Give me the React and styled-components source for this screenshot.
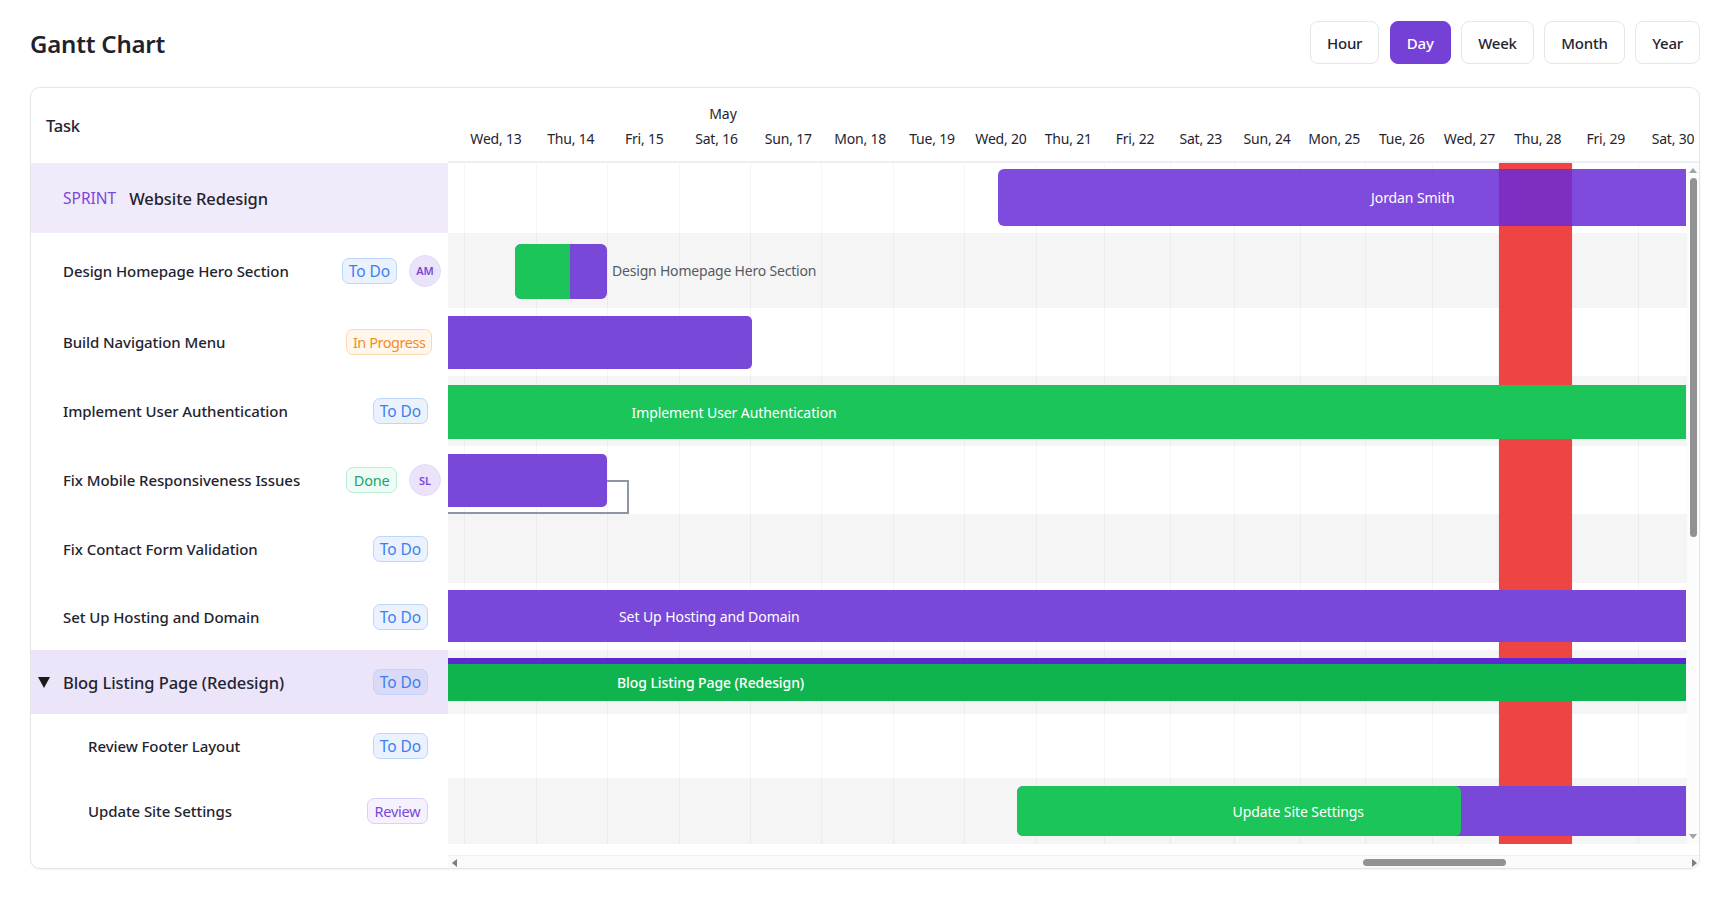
import React from 'react';
import styled, { createGlobalStyle } from 'styled-components';

const PURPLE = '#7a48d8';
const GREEN = '#1cc55a';

const ranges = ['Hour', 'Day', 'Week', 'Month', 'Year'];

const days = [
  ['Wed, 13', 75], ['Thu, 14', 74.5], ['Fri, 15', 72.5], ['Sat, 16', 72],
  ['Sun, 17', 71.5], ['Mon, 18', 72.5], ['Tue, 19', 71], ['Wed, 20', 67],
  ['Thu, 21', 67.5], ['Fri, 22', 66], ['Sat, 23', 65.5], ['Sun, 24', 67],
  ['Mon, 25', 67.5], ['Tue, 26', 67.5], ['Wed, 27', 68], ['Thu, 28', 68.5],
  ['Fri, 29', 67.5], ['Sat, 30', 67],
];

const gridColumns = [
  17, 71.5, 71, 72, 71, 71, 72, 71, 72, 68, 66.5, 64, 65.5, 65, 67, 66.5, 73.5, 66.5,
];

const rows = [
  {
    id: 'sprint', kind: 'sprint', height: 70, name: 'Website Redesign',
    bars: [{ left: 550, width: 688, top: 6, height: 57, radius: '6px 0 0 6px', color: '#692cd6', fade: true, label: 'Jordan Smith', labelAt: 373 }],
  },
  {
    id: 'hero', height: 75, shade: true, name: 'Design Homepage Hero Section', status: 'todo', avatar: 'AM',
    bars: [{ left: 67, width: 92, top: 11, height: 55, radius: '6px', progress: 55, progressRadius: '6px 0 0 6px' }],
    outside: { text: 'Design Homepage Hero Section', left: 164 },
  },
  {
    id: 'nav', height: 68, name: 'Build Navigation Menu', status: 'progress',
    bars: [{ left: 0, width: 303.5, top: 8, height: 53, radius: '0 5px 5px 0' }],
  },
  {
    id: 'auth', height: 70, shade: true, name: 'Implement User Authentication', status: 'todo',
    bars: [{ left: 0, width: 1238, top: 9, height: 54, color: GREEN, label: 'Implement User Authentication', labelAt: 183.5 }],
  },
  {
    id: 'mobile', height: 68, name: 'Fix Mobile Responsiveness Issues', status: 'done', avatar: 'SL',
    bars: [{ left: 0, width: 159, top: 8, height: 53, radius: '0 5px 5px 0' }],
  },
  { id: 'form', height: 69, shade: true, name: 'Fix Contact Form Validation', status: 'todo', bars: [] },
  {
    id: 'hosting', height: 67, name: 'Set Up Hosting and Domain', status: 'todo',
    bars: [{ left: 0, width: 1238, top: 7, height: 52, label: 'Set Up Hosting and Domain', labelAt: 171 }],
  },
  {
    id: 'blog', kind: 'group', height: 64, shade: true, name: 'Blog Listing Page (Redesign)', status: 'todo',
    bars: [{ left: 0, width: 1238, top: 8, height: 43, color: '#5f28d2', strip: true, label: 'Blog Listing Page (Redesign)', labelAt: 169 }],
  },
  { id: 'footer', kind: 'child', height: 64, name: 'Review Footer Layout', status: 'todo', bars: [] },
  {
    id: 'settings', kind: 'child', height: 66, shade: true, name: 'Update Site Settings', status: 'review',
    bars: [{ left: 568.5, width: 669.5, top: 8, height: 50, radius: '6px 0 0 6px', progress: 444.5, progressRadius: '6px', label: 'Update Site Settings', labelAt: 216 }],
  },
];

const statusLabels = { todo: 'To Do', progress: 'In Progress', done: 'Done', review: 'Review' };

const statusStyles = {
  todo: { bg: 'rgba(59, 130, 246, 0.1)', border: '#bcd6fd', text: '#3b7ff0', size: 15.5, spacing: -0.1, pad: 6 },
  progress: { bg: '#fff7ed', border: '#fdd9ae', text: '#f58c1d', size: 14.5, spacing: -0.45, pad: 5.5 },
  done: { bg: '#eefcf5', border: '#b5eed2', text: '#17a56c', size: 14.5, spacing: -0.2, pad: 6.5 },
  review: { bg: '#f5f1fe', border: '#dccffa', text: '#7a48d8', size: 14.5, spacing: -0.2, pad: 6.5 },
};

const GlobalStyle = createGlobalStyle`
  html, body {
    margin: 0;
    background: #fff;
  }
  body {
    font-family: 'Noto Sans', 'Open Sans', sans-serif;
    color: #1f2430;
  }
  * {
    box-sizing: border-box;
  }
`;

const Page = styled.div`
  width: 1725px;
  height: 912px;
  padding-left: 30px;
  overflow: hidden;
`;

const TopBar = styled.header`
  width: 1670px;
  height: 87px;
  padding-top: 21px;
  display: flex;
  justify-content: space-between;
  align-items: flex-start;
`;

const Title = styled.h1`
  margin: 0;
  height: 45px;
  line-height: 45px;
  font-size: 24px;
  font-weight: 600;
  letter-spacing: -0.2px;
  color: #1d222c;
`;

const RangeGroup = styled.div`
  display: flex;
  gap: 10.5px;
`;

const RangeButton = styled.button`
  height: 43px;
  padding: 0 16px;
  border: 1px solid ${(p) => (p.$active ? '#7540d6' : '#e4e6ea')};
  border-radius: 8px;
  background: ${(p) => (p.$active ? '#7540d6' : '#fff')};
  color: ${(p) => (p.$active ? '#fff' : '#1f2430')};
  font-family: inherit;
  font-size: 15px;
  font-weight: 500;
  letter-spacing: -0.2px;
`;

const Card = styled.section`
  width: 1670px;
  height: 782px;
  display: flex;
  border: 1px solid #e3e5e9;
  border-radius: 10px;
  box-shadow: 0 1px 2px rgba(0, 0, 0, 0.05);
  overflow: hidden;
`;

const TaskPanel = styled.div`
  flex: 0 0 417px;
`;

const TaskHeader = styled.div`
  height: 75px;
  padding-left: 15px;
  display: flex;
  align-items: center;
  font-size: 16.5px;
  font-weight: 500;
  letter-spacing: -0.2px;
`;

const TaskRow = styled.div`
  height: ${(p) => p.$height}px;
  display: flex;
  align-items: center;
  padding-left: ${(p) => (p.$kind === 'child' ? 57 : 32)}px;
  padding-right: ${(p) => (p.$avatar ? 7 : 20)}px;
  position: relative;
  background: ${(p) =>
    p.$kind === 'sprint' ? '#f0eafb' : p.$kind === 'group' ? '#ece4f9' : '#fff'};
  font-size: 15px;
  font-weight: 500;
  letter-spacing: -0.08px;
`;

const SprintTag = styled.span`
  margin-right: 13px;
  color: #7a48d8;
  font-size: 15.5px;
  font-weight: 400;
  letter-spacing: 0;
`;

const SprintName = styled.span`
  font-size: 16.5px;
`;

const GroupName = styled.span`
  font-size: 16.5px;
`;

const Caret = styled.span`
  position: absolute;
  left: 7px;
  top: 50%;
  margin-top: -5px;
  width: 0;
  height: 0;
  border-left: 6px solid transparent;
  border-right: 6px solid transparent;
  border-top: 11px solid #1a1a1a;
`;

const Badge = styled.span`
  margin-left: auto;
  margin-right: ${(p) => (p.$status === 'progress' ? -4 : 0)}px;
  height: 26px;
  padding: 0 ${(p) => statusStyles[p.$status].pad}px;
  display: flex;
  align-items: center;
  border: 1px solid ${(p) => statusStyles[p.$status].border};
  border-radius: 7px;
  background: ${(p) => statusStyles[p.$status].bg};
  color: ${(p) => statusStyles[p.$status].text};
  font-size: ${(p) => statusStyles[p.$status].size}px;
  font-weight: 400;
  letter-spacing: ${(p) => statusStyles[p.$status].spacing}px;
  white-space: nowrap;
`;

const Avatar = styled.span`
  margin-left: 12px;
  flex: 0 0 32px;
  height: 32px;
  display: flex;
  align-items: center;
  justify-content: center;
  border-radius: 50%;
  border: 1px solid #e4dbf7;
  background: #ebe3f9;
  color: #7a48d8;
  font-size: 11px;
  font-weight: 600;
  letter-spacing: 0;
`;

const Timeline = styled.div`
  flex: 1;
  min-width: 0;
`;

const DatesHeader = styled.div`
  height: 75px;
  padding-top: 14px;
  border-bottom: 2px solid #eeeef2;
  overflow: hidden;
`;

const MonthLabel = styled.div`
  width: 550px;
  height: 24px;
  line-height: 24px;
  margin-bottom: 1px;
  text-align: center;
  font-size: 14px;
`;

const DayRow = styled.div`
  display: flex;
  padding-left: 10.5px;
`;

const DayLabel = styled.div`
  flex: 0 0 ${(p) => p.$width}px;
  height: 24px;
  line-height: 24px;
  text-align: center;
  font-size: 14px;
  letter-spacing: -0.2px;
  white-space: nowrap;
`;

const ChartFrame = styled.div`
  display: flex;
  height: 681px;
`;

const Chart = styled.div`
  flex: 0 0 1239px;
  position: relative;
  overflow: hidden;
`;

const ChartRow = styled.div`
  height: ${(p) => p.$height}px;
  position: relative;
  background: ${(p) => (p.$shade ? '#f5f5f5' : '#fff')};
`;

const GridLines = styled.div`
  position: absolute;
  inset: 0;
  z-index: 1;
  display: flex;
  pointer-events: none;
`;

const GridColumn = styled.div`
  flex: 0 0 ${(p) => p.$width}px;
  border-right: 1px solid rgba(0, 0, 0, 0.04);
`;

const TodayBand = styled.div`
  position: absolute;
  z-index: 1;
  top: 0;
  bottom: 0;
  left: 1050.5px;
  width: 73.5px;
  background: #ef4444;
`;

const Connector = styled.svg`
  position: absolute;
  z-index: 1;
  left: 0;
  top: 0;
`;

const Bar = styled.div.attrs((p) => ({
  style: { left: p.$left, width: p.$width, top: p.$top, height: p.$height },
}))`
  position: absolute;
  z-index: 2;
  display: flex;
  align-items: center;
  overflow: hidden;
  border-radius: ${(p) => p.$radius || 0};
  background: ${(p) => p.$color || PURPLE};
  opacity: ${(p) => (p.$fade ? 0.85 : 1)};
`;

const BarProgress = styled.div.attrs((p) => ({
  style: { width: p.$width },
}))`
  position: absolute;
  left: 0;
  top: 0;
  bottom: 0;
  border-radius: ${(p) => p.$radius};
  background: ${GREEN};
`;

const BarStrip = styled.div`
  position: absolute;
  left: 0;
  right: 0;
  top: 6px;
  bottom: 0;
  background: #10b44e;
`;

const BarLabel = styled.span.attrs((p) => ({
  style: { marginLeft: p.$offset },
}))`
  position: relative;
  color: #fff;
  font-size: 14px;
  letter-spacing: -0.08px;
  white-space: nowrap;
  padding-top: ${(p) => (p.$low ? 6 : 0)}px;
  font-weight: ${(p) => (p.$low ? 500 : 400)};
`;

const OutsideLabel = styled.span.attrs((p) => ({
  style: { left: p.$left },
}))`
  position: absolute;
  z-index: 2;
  top: 50%;
  transform: translateY(-50%);
  margin-top: -1px;
  color: #555a63;
  font-size: 14px;
  letter-spacing: -0.2px;
  white-space: nowrap;
`;

const VerticalScroll = styled.div`
  flex: 0 0 12px;
  display: flex;
  flex-direction: column;
  align-items: center;
  padding: 5px 0 5px;
  background: #fcfcfc;
`;

const VerticalThumb = styled.div`
  margin-top: 5px;
  width: 7px;
  height: 359px;
  border-radius: 4px;
  background: #929292;
`;

const ArrowUp = styled.span`
  width: 0;
  height: 0;
  border-left: 4px solid transparent;
  border-right: 4px solid transparent;
  border-bottom: 5px solid #a3a3a3;
`;

const ArrowDown = styled.span`
  margin-top: auto;
  width: 0;
  height: 0;
  border-left: 4px solid transparent;
  border-right: 4px solid transparent;
  border-top: 5px solid #a3a3a3;
`;

const HorizontalScroll = styled.div`
  margin-top: 11px;
  height: 14px;
  padding: 0 2px 0 4px;
  display: flex;
  align-items: center;
  background: #fafafa;
  border-top: 1px solid #f0f0f0;
`;

const ArrowLeft = styled.span`
  width: 0;
  height: 0;
  border-top: 4px solid transparent;
  border-bottom: 4px solid transparent;
  border-right: 5px solid #7d7d7d;
`;

const ArrowRight = styled.span`
  width: 0;
  height: 0;
  border-top: 4px solid transparent;
  border-bottom: 4px solid transparent;
  border-left: 5px solid #7d7d7d;
`;

const HorizontalThumb = styled.div`
  margin-left: 906px;
  margin-right: auto;
  width: 143px;
  height: 7px;
  border-radius: 4px;
  background: #929292;
`;

const TaskName = ({ row }) => {
  if (row.kind === 'sprint') {
    return (
      <>
        <SprintTag>SPRINT</SprintTag>
        <SprintName>{row.name}</SprintName>
      </>
    );
  }
  if (row.kind === 'group') {
    return (
      <>
        <Caret />
        <GroupName>{row.name}</GroupName>
      </>
    );
  }
  return <span>{row.name}</span>;
};

const GanttBar = ({ bar }) => (
  <Bar
    $left={bar.left}
    $width={bar.width}
    $top={bar.top}
    $height={bar.height}
    $radius={bar.radius}
    $color={bar.color}
    $fade={bar.fade}
  >
    {bar.progress && <BarProgress $width={bar.progress} $radius={bar.progressRadius} />}
    {bar.strip && <BarStrip />}
    {bar.label && (
      <BarLabel $offset={bar.labelAt} $low={bar.strip}>
        {bar.label}
      </BarLabel>
    )}
  </Bar>
);

export default function App() {
  return (
    <Page>
      <GlobalStyle />
      <TopBar>
        <Title>Gantt Chart</Title>
        <RangeGroup>
          {ranges.map((range) => (
            <RangeButton key={range} $active={range === 'Day'}>
              {range}
            </RangeButton>
          ))}
        </RangeGroup>
      </TopBar>

      <Card>
        <TaskPanel>
          <TaskHeader>Task</TaskHeader>
          {rows.map((row) => (
            <TaskRow key={row.id} $height={row.height} $kind={row.kind} $avatar={!!row.avatar}>
              <TaskName row={row} />
              {row.status && <Badge $status={row.status}>{statusLabels[row.status]}</Badge>}
              {row.avatar && <Avatar>{row.avatar}</Avatar>}
            </TaskRow>
          ))}
        </TaskPanel>

        <Timeline>
          <DatesHeader>
            <MonthLabel>May</MonthLabel>
            <DayRow>
              {days.map(([label, width]) => (
                <DayLabel key={label} $width={width}>
                  {label}
                </DayLabel>
              ))}
            </DayRow>
          </DatesHeader>

          <ChartFrame>
            <Chart>
              {rows.map((row) => (
                <ChartRow key={row.id} $height={row.height} $shade={row.shade}>
                  {row.bars.map((bar, i) => (
                    <GanttBar key={i} bar={bar} />
                  ))}
                  {row.outside && <OutsideLabel $left={row.outside.left}>{row.outside.text}</OutsideLabel>}
                </ChartRow>
              ))}
              <GridLines>
                {gridColumns.map((width, i) => (
                  <GridColumn key={i} $width={width} />
                ))}
              </GridLines>
              <TodayBand />
              <Connector width="190" height="360">
                <path d="M159 318 H180 V350 H0" fill="none" stroke="#8f96a3" strokeWidth="2" />
              </Connector>
            </Chart>
            <VerticalScroll>
              <ArrowUp />
              <VerticalThumb />
              <ArrowDown />
            </VerticalScroll>
          </ChartFrame>

          <HorizontalScroll>
            <ArrowLeft />
            <HorizontalThumb />
            <ArrowRight />
          </HorizontalScroll>
        </Timeline>
      </Card>
    </Page>
  );
}
